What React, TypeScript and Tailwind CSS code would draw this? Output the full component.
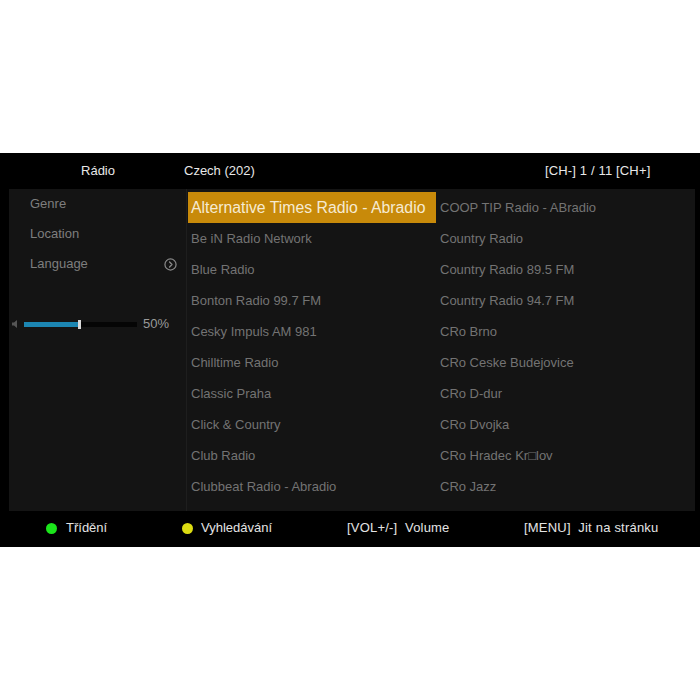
const leftCol = [
  "Alternative Times Radio - Abradio",
  "Be iN Radio Network",
  "Blue Radio",
  "Bonton Radio 99.7 FM",
  "Cesky Impuls AM 981",
  "Chilltime Radio",
  "Classic Praha",
  "Click & Country",
  "Club Radio",
  "Clubbeat Radio - Abradio",
];

const rightCol = [
  "COOP TIP Radio - ABradio",
  "Country Radio",
  "Country Radio 89.5 FM",
  "Country Radio 94.7 FM",
  "CRo Brno",
  "CRo Ceske Budejovice",
  "CRo D-dur",
  "CRo Dvojka",
  "CRo Hradec Kr\u25A1lov",
  "CRo Jazz",
];

const menu = ["Genre", "Location", "Language"];

const ArrowCircle = () => (
  <svg width="13" height="13" viewBox="0 0 14 14" fill="none">
    <circle cx="7" cy="7" r="6" stroke="#8a8a8a" strokeWidth="1.3" />
    <path d="M6 4.3 L8.6 7 L6 9.7" stroke="#8a8a8a" strokeWidth="1.4" strokeLinecap="round" strokeLinejoin="round" />
  </svg>
);

const Speaker = () => (
  <svg width="6" height="8" viewBox="0 0 6 8">
    <path d="M0 2.5 H2 L5 0 V8 L2 5.5 H0 Z" fill="#555" />
  </svg>
);

const StationRow = ({ name, active }: { name: string; active?: boolean }) => (
  <div
    className={
      active
        ? "h-[31px] flex items-center pl-[3px] bg-[#c88a0a] text-[#f6ead2] text-[15.8px]"
        : "h-[31px] flex items-center pl-[3px] text-[#737373] text-[13px]"
    }
  >
    {name}
  </div>
);

export default function App() {
  return (
    <div
      className="w-[700px] h-[700px] bg-white pt-[153px]"
      style={{ fontFamily: '"Liberation Sans", Arial, "DejaVu Sans", sans-serif' }}
    >
      <div className="bg-black h-[394px] flex flex-col">
        <div className="h-[36px] flex items-center text-[13px] text-[#e8e8e8]">
          <div className="w-[196px] text-center">Rádio</div>
          <div className="w-[361px] -ml-[12px]">Czech (202)</div>
          <div className="tracking-[0.15px]">[CH-] 1 / 11 [CH+]</div>
        </div>

        <div className="ml-[9px] w-[686px] h-[322px] bg-[#141414] flex">
          <div className="w-[178px] border-r border-[#1e1e1e] flex flex-col text-[13px] text-[#7e7e7e]">
            {menu.map((m) => (
              <div key={m} className="h-[30px] flex items-center pl-[21px] pr-[9px] justify-between">
                <span>{m}</span>
                {m === "Language" && <ArrowCircle />}
              </div>
            ))}
            <div className="mt-[30px] h-[30px] flex items-center pl-[3px]">
              <Speaker />
              <div className="ml-[6px] w-[113px] h-[5px] bg-[#050505] relative">
                <div className="w-[55px] h-full bg-[#1c86b2]" />
                <div className="absolute left-[54px] top-[-2px] w-[3px] h-[9px] bg-[#d8d8d8]" />
              </div>
              <span className="ml-[6px] text-[13px] text-[#9a9a9a]">50%</span>
            </div>
          </div>

          <div className="pl-[1px] pt-[3px] flex">
            <div className="w-[248px]">
              {leftCol.map((n, i) => (
                <StationRow key={n} name={n} active={i === 0} />
              ))}
            </div>
            <div className="w-[250px] pl-[1px]">
              {rightCol.map((n) => (
                <StationRow key={n} name={n} />
              ))}
            </div>
          </div>
        </div>

        <div className="h-[36px] pb-[2px] flex items-center text-[13px] text-[#e4e4e4]">
          <div className="ml-[46px] w-[11px] h-[11px] rounded-full bg-[#1be51b]" />
          <span className="ml-[9px] w-[116px]">Třídění</span>
          <div className="w-[11px] h-[11px] rounded-full bg-[#dcdc12]" />
          <span className="ml-[8px] w-[146px]">Vyhledávání</span>
          <span className="w-[177px] whitespace-pre tracking-[0.2px]">[VOL+/-]  Volume</span>
          <span className="whitespace-pre tracking-[0.2px]">[MENU]  Jit na stránku</span>
        </div>
      </div>
    </div>
  );
}
